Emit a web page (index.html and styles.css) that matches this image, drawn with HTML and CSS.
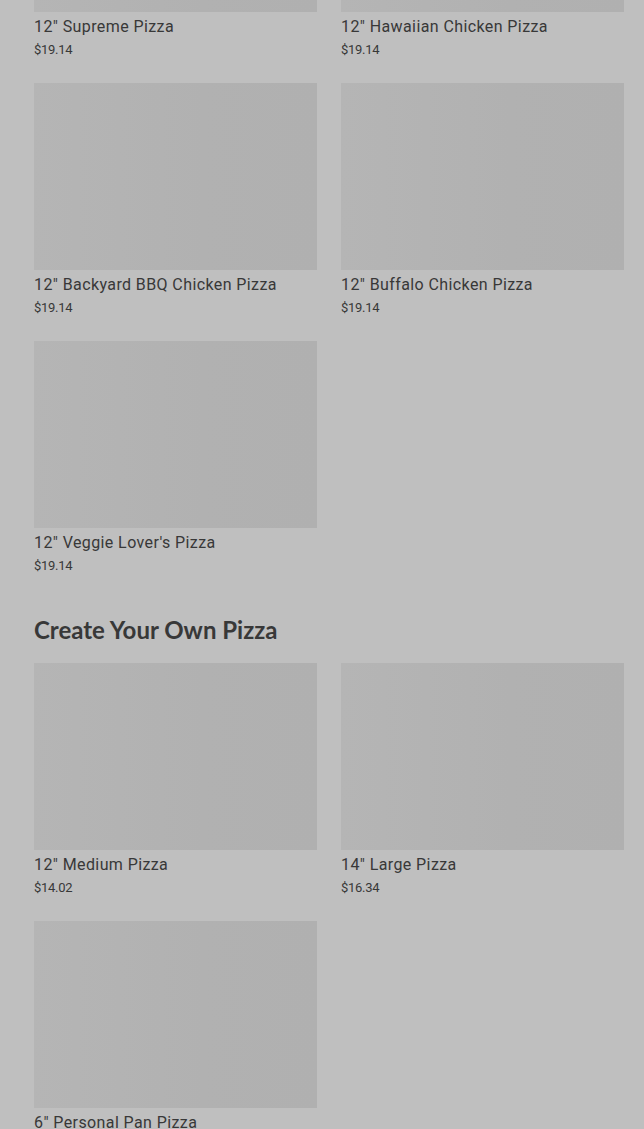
FILE: index.html
```html
<!DOCTYPE html>
<html lang="en">
<head>
    <meta charset="UTF-8">
    <meta name="viewport" content="width=device-width, initial-scale=1.0">
    <title>Menu</title>
    <link rel="stylesheet" href="styles.css">
</head>
<body>
    <div class="menu">
        <section class="category first">
            <div class="grid">
                <div class="card">
                    <div class="photo"></div>
                    <p class="name">12" Supreme Pizza</p>
                    <p class="price">$19.14</p>
                </div>
                <div class="card">
                    <div class="photo"></div>
                    <p class="name">12" Hawaiian Chicken Pizza</p>
                    <p class="price">$19.14</p>
                </div>
                <div class="card">
                    <div class="photo"></div>
                    <p class="name">12" Backyard BBQ Chicken Pizza</p>
                    <p class="price">$19.14</p>
                </div>
                <div class="card">
                    <div class="photo"></div>
                    <p class="name">12" Buffalo Chicken Pizza</p>
                    <p class="price">$19.14</p>
                </div>
                <div class="card">
                    <div class="photo"></div>
                    <p class="name">12" Veggie Lover's Pizza</p>
                    <p class="price">$19.14</p>
                </div>
            </div>
        </section>

        <section class="category">
            <h2>Create Your Own Pizza</h2>
            <div class="grid">
                <div class="card">
                    <div class="photo"></div>
                    <p class="name">12" Medium Pizza</p>
                    <p class="price">$14.02</p>
                </div>
                <div class="card">
                    <div class="photo"></div>
                    <p class="name">14" Large Pizza</p>
                    <p class="price">$16.34</p>
                </div>
                <div class="card">
                    <div class="photo"></div>
                    <p class="name">6" Personal Pan Pizza</p>
                    <p class="price">$8.72</p>
                </div>
            </div>
        </section>
    </div>
</body>
</html>
```

FILE: styles.css
```css
* {
    margin: 0;
    padding: 0;
    box-sizing: border-box;
}

html, body {
    background-color: #bfbfbf;
    color: #383838;
    font-family: Roboto, "Liberation Sans", sans-serif;
    overflow: hidden;
}

.menu {
    padding: 0 20px 0 34px;
    margin-top: -175px;
}

.category {
    margin-bottom: 17px;
}

.category.first {
    margin-bottom: 41px;
}

h2 {
    font-family: Lato, "Liberation Sans", sans-serif;
    font-weight: 700;
    font-size: 24px;
    line-height: 28px;
    color: #383838;
    margin-bottom: 19px;
}

.grid {
    display: grid;
    grid-template-columns: 283px 283px;
    column-gap: 24px;
    row-gap: 24px;
}

.photo {
    height: 187px;
    background: linear-gradient(90deg, #b5b5b5, #b1b1b1 60%, #b0b0b0);
}

.name {
    margin-top: 5px;
    font-size: 16px;
    line-height: 20px;
    letter-spacing: 0.4px;
}

.price {
    margin-top: 4px;
    font-size: 13px;
    line-height: 18px;
    letter-spacing: -0.3px;
}
```
